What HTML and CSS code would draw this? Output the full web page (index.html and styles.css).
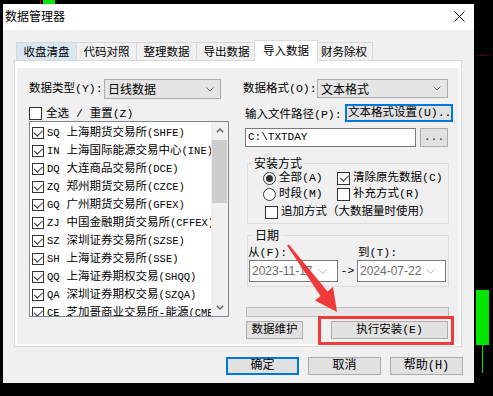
FILE: index.html
```html
<!DOCTYPE html>
<html>
<head>
<meta charset="utf-8">
<link rel="stylesheet" href="styles.css">
</head>
<body>
<div class="bg-redline"></div>
<div class="bg-greentop"></div>
<div class="bg-dots"></div>
<div class="candle"></div>
<div class="wick"></div>

<div class="win">
  <div class="titlebar">
    <span class="title">数据管理器</span>
    <svg class="close" width="11" height="11" viewBox="0 0 11 11"><path d="M0.5 0.5L10.5 10.5M10.5 0.5L0.5 10.5" stroke="#000" stroke-width="1" fill="none"/></svg>
  </div>
  <div class="client">
    <div class="tabs">
      <div class="tab hot">收盘清盘</div>
      <div class="tab">代码对照</div>
      <div class="tab">整理数据</div>
      <div class="tab">导出数据</div>
      <div class="tab sel">导入数据</div>
      <div class="tab last">财务除权</div>
    </div>
    <div class="panel">
      <div class="page">
        <div class="left">
          <div class="r1">
            <span class="lbl w75">数据类型(Y):</span>
            <div class="combo c117"><span>日线数据</span><svg class="chev" width="8" height="5" viewBox="0 0 8 5"><path d="M0.5 0.5L4 4L7.5 0.5" stroke="#707070" fill="none"/></svg></div>
          </div>
          <div class="allrow"><span class="cb"></span><span>全选 / 重置(Z)</span></div>
          <div class="list">
            <div class="items">
              <div class="item"><span class="cb sm on"></span><span class="t"><span class="en">SQ</span> 上海期货交易所<span class="en">(SHFE)</span></span></div>
              <div class="item"><span class="cb sm on"></span><span class="t"><span class="en">IN</span> 上海国际能源交易中心<span class="en">(INE)</span></span></div>
              <div class="item"><span class="cb sm on"></span><span class="t"><span class="en">DQ</span> 大连商品交易所<span class="en">(DCE)</span></span></div>
              <div class="item"><span class="cb sm on"></span><span class="t"><span class="en">ZQ</span> 郑州期货交易所<span class="en">(CZCE)</span></span></div>
              <div class="item"><span class="cb sm on"></span><span class="t"><span class="en">GQ</span> 广州期货交易所<span class="en">(GFEX)</span></span></div>
              <div class="item"><span class="cb sm on"></span><span class="t"><span class="en">ZJ</span> 中国金融期货交易所<span class="en">(CFFEX)</span></span></div>
              <div class="item"><span class="cb sm on"></span><span class="t"><span class="en">SZ</span> 深圳证券交易所<span class="en">(SZSE)</span></span></div>
              <div class="item"><span class="cb sm on"></span><span class="t"><span class="en">SH</span> 上海证券交易所<span class="en">(SSE)</span></span></div>
              <div class="item"><span class="cb sm on"></span><span class="t"><span class="en">QQ</span> 上海证券期权交易<span class="en">(SHQQ)</span></span></div>
              <div class="item"><span class="cb sm on"></span><span class="t"><span class="en">QA</span> 深圳证券期权交易<span class="en">(SZQA)</span></span></div>
              <div class="item"><span class="cb sm on"></span><span class="t"><span class="en">CE</span> 芝加哥商业交易所-能源<span class="en">(CME)</span></span></div>
            </div>
            <div class="sbar">
              <div class="sbtn"><svg width="8" height="5" viewBox="0 0 8 5"><path d="M0.8 4.2L4 1L7.2 4.2" stroke="#606060" stroke-width="1.4" fill="none"/></svg></div>
              <div class="thumb"></div>
              <div class="strack"></div>
              <div class="sbtn"><svg width="8" height="5" viewBox="0 0 8 5"><path d="M0.8 0.8L4 4L7.2 0.8" stroke="#606060" stroke-width="1.4" fill="none"/></svg></div>
            </div>
          </div>
        </div>

        <div class="right">
          <div class="rr1">
            <span class="lbl w74">数据格式(O):</span>
            <div class="combo c131"><span>文本格式</span><svg class="chev" width="8" height="5" viewBox="0 0 8 5"><path d="M0.5 0.5L4 4L7.5 0.5" stroke="#707070" fill="none"/></svg></div>
          </div>
          <div class="rr2">
            <span class="lbl w100">输入文件路径(P):</span>
            <div class="tbtn">文本格式设置(U)..</div>
          </div>
          <div class="rr3">
            <div class="inp">C:\TXTDAY</div>
            <div class="more">...</div>
          </div>
          <fieldset class="grp g1">
            <legend>安装方式</legend>
            <div class="gbody">
              <div class="opt">
                <div class="o1"><span class="rb on"></span><span>全部(A)</span></div>
                <div class="o2"><span class="cb on"></span><span>清除原先数据(C)</span></div>
              </div>
              <div class="opt">
                <div class="o1"><span class="rb"></span><span>时段(M)</span></div>
                <div class="o2"><span class="cb"></span><span>补充方式(R)</span></div>
              </div>
              <div class="opt o3">
                <div class="o2"><span class="cb"></span><span>追加方式（大数据量时使用）</span></div>
              </div>
            </div>
          </fieldset>
          <fieldset class="grp g2">
            <legend>日期</legend>
            <div class="dbody">
              <span class="dlbl l1">从(F):</span>
              <span></span>
              <span class="dlbl l2">到(T):</span>
              <div class="dcombo"><span>2023-11-17</span><svg width="9" height="5" viewBox="0 0 9 5"><path d="M0.5 0.5L4.5 4.5L8.5 0.5" stroke="#b8b8b8" fill="none"/></svg></div>
              <span class="darrow">-&gt;</span>
              <div class="dcombo"><span>2024-07-22</span><svg width="9" height="5" viewBox="0 0 9 5"><path d="M0.5 0.5L4.5 4.5L8.5 0.5" stroke="#b8b8b8" fill="none"/></svg></div>
            </div>
          </fieldset>
          <div class="prog"></div>
          <div class="brow">
            <div class="btn b1">数据维护</div>
            <div class="btn b2">执行安装(E)</div>
          </div>
        </div>
      </div>
    </div>
    <div class="footer">
      <div class="btn fbtn def">确定</div>
      <div class="btn fbtn">取消</div>
      <div class="btn fbtn">帮助(H)</div>
    </div>
  </div>
</div>

<svg class="annot" width="493" height="396" viewBox="0 0 493 396">
  <polygon points="287,245.5 289,244.5 327.5,291.5 333,287 337,312 315,300.5 320.5,296" fill="#f03a3a"/>
  <rect x="319.5" y="317.5" width="133" height="26" fill="none" stroke="#f33b3b" stroke-width="3"/>
</svg>
</body>
</html>
```
FILE: styles.css
```css
* { box-sizing: border-box; }
html, body { margin: 0; padding: 0; }
body {
  background: #000;
  width: 493px;
  height: 396px;
  overflow: hidden;
  position: relative;
  font-family: "Liberation Mono", "Noto Sans CJK SC", sans-serif;
  font-size: 11.5px;
  line-height: 14px;
  color: #000;
}

/* background chart fragments */
.bg-redline { position: absolute; left: 40px; top: 0; width: 1px; height: 4px; background: #c00000; }
.bg-greentop { position: absolute; left: 43px; top: 0; width: 12px; height: 4px; background: #00e600; }
.bg-dots { position: absolute; left: 477px; top: 55px; width: 13px; height: 1px;
  background: repeating-linear-gradient(90deg, #b00000 0 1px, transparent 1px 3px); }
.candle { position: absolute; left: 476px; top: 290px; width: 13px; height: 55px; background: #00e600; }
.wick { position: absolute; left: 482px; top: 345px; width: 1px; height: 28px; background: #00e600; }

.win {
  margin: 4px 0 0 3px;
  width: 471px;
  height: 379px;
  background: #f0f0f0;
  display: flex;
  flex-direction: column;
}
.titlebar {
  height: 26px;
  background: #fff;
  display: flex;
  align-items: center;
  justify-content: space-between;
  padding: 0 9px 2px 2px;
}
.title { font-family: "Noto Sans CJK SC", sans-serif; font-size: 12px; line-height: 14px; }

.client {
  flex: 1;
  padding: 10px 12px 0 11px;
  display: flex;
  flex-direction: column;
}
.tabs {
  display: flex;
  align-items: flex-end;
  height: 20px;
  padding-left: 2px;
  position: relative;
  z-index: 1;
}
.tab {
  width: 61px;
  height: 18px;
  margin-left: -1px;
  border: 1px solid #d9d9d9;
  border-bottom: none;
  background: #f0f0f0;
  text-align: center;
  line-height: 17px;
  font-family: "Noto Sans CJK SC", sans-serif;
  font-size: 11.5px;
}
.tab:first-child { margin-left: 0; }
.tab.hot { background: #d8e6f2; }
.tab.sel {
  background: #fff;
  width: 64px;
  height: 21px;
  margin: 0 -2px -1px -3px;
  position: relative;
  z-index: 2;
  line-height: 19px;
}
.tab.last { width: 58px; }

.panel {
  height: 287px;
  border: 1px solid #d9d9d9;
  background: #fff;
  padding: 7px 2px 2px 2px;
}
.page {
  height: 100%;
  background: #f0f0f0;
  display: flex;
  padding: 11px 0 0 12px;
}

.lbl { white-space: nowrap; }
.w75 { width: 75px; }
.w74 { width: 74px; }
.w100 { width: 100px; margin-left: 2px; padding-top: 3px; }

.combo {
  display: flex;
  align-items: center;
  justify-content: space-between;
  height: 100%;
  border: 1px solid #adadad;
  background: #e5e5e5;
  padding: 0 6px 0 3px;
  font-family: "Noto Sans CJK SC", sans-serif;
  font-size: 12px;
}
.c117 { width: 117px; }
.c131 { width: 131px; }

/* left column */
.left { width: 200px; display: flex; flex-direction: column; }
.r1 { display: flex; align-items: center; height: 20px; }
.allrow { display: flex; align-items: center; gap: 4px; height: 13px; margin-top: 8px; white-space: nowrap; }
.list {
  margin-top: 1px;
  height: 196px;
  border: 1px solid #828790;
  background: #fff;
  display: flex;
}
.items { flex: 1; overflow: hidden; padding-top: 2px; }
.item { height: 18px; display: flex; align-items: center; padding-left: 2px; white-space: nowrap; }
.item .cb { margin-right: 3px; flex: none; }
.en { font-size: 10.5px; }
.sbar { width: 17px; flex: none; background: #f0f0f0; display: flex; flex-direction: column; }
.sbtn { height: 17px; display: flex; align-items: center; justify-content: center; }
.thumb { height: 63px; margin: 1px 1px 0 1px; background: #cdcdcd; }
.strack { flex: 1; }

/* checkbox / radio */
.cb {
  display: inline-block;
  position: relative;
  width: 13px;
  height: 13px;
  border: 1px solid #333;
  background: #fff;
  flex: none;
}
.cb.sm { width: 12px; height: 12px; }
.cb.on::after {
  content: "";
  position: absolute;
  left: 3.5px;
  top: 0.5px;
  width: 3.5px;
  height: 7px;
  border: solid #333;
  border-width: 0 1.4px 1.4px 0;
  transform: rotate(45deg);
}
.cb.sm.on::after { left: 3px; top: 0; }
.rb {
  display: inline-block;
  position: relative;
  width: 13px;
  height: 13px;
  border: 1px solid #333;
  border-radius: 50%;
  background: #fff;
  flex: none;
}
.rb.on::after {
  content: "";
  position: absolute;
  left: 2px;
  top: 2px;
  width: 7px;
  height: 7px;
  border-radius: 50%;
  background: #333;
}

/* right column */
.right { width: 210px; margin-left: 14px; display: flex; flex-direction: column; }
.rr1 { display: flex; align-items: center; height: 19px; }
.rr2 { display: flex; align-items: center; height: 18px; margin-top: 6px; }
.tbtn {
  width: 108px;
  height: 18px;
  border: 2px solid #0078d7;
  background: #e1e1e1;
  padding-left: 1px;
  line-height: 14px;
  white-space: nowrap;
  overflow: hidden;
}
.rr3 { display: flex; height: 19px; margin-top: 6px; margin-left: 2px; }
.inp {
  width: 171px;
  border: 1px solid #7a7a7a;
  background: #fff;
  font-size: 11px;
  line-height: 17px;
  padding-left: 2px;
}
.more {
  width: 28px;
  margin-left: 4px;
  border: 1px solid #adadad;
  background: #e1e1e1;
  text-align: center;
  line-height: 15px;
  color: #333;
}

.grp {
  margin: 9px 0 0 4px;
  padding: 0;
  width: 202px;
  min-width: 0;
  border: 1px solid #dcdcdc;
}
.grp legend {
  margin-left: 4px;
  padding: 0 2px;
  font-family: "Noto Sans CJK SC", sans-serif;
  font-size: 12px;
  line-height: 14px;
}
.gbody { padding: 0 0 3px 15px; }
.opt { display: flex; align-items: center; height: 16px; white-space: nowrap; }
.o1 { width: 74px; display: flex; align-items: center; gap: 3px; }
.o2 { display: flex; align-items: center; gap: 3px; }
.o3 { margin-top: 2px; margin-left: 2px; }

.g2 { margin-top: 4px; }
.g2 legend { margin-left: 5px; }
.dbody {
  display: grid;
  grid-template-columns: 89px 19px 89px;
  grid-template-rows: 18px 22px;
  padding: 0 0 4px 1px;
}
.dlbl { align-self: end; white-space: nowrap; }
.l1 { margin-left: -1px; }
.l2 { margin-left: 1px; }
.dcombo {
  border: 1px solid #7a7a7a;
  background: #fff;
  display: flex;
  align-items: center;
  justify-content: space-between;
  padding: 0 10px 0 2px;
  font-family: "Liberation Sans", sans-serif;
  font-size: 12px;
  color: #6d6d6d;
}
.darrow { align-self: center; text-align: center; }

.prog {
  margin: 20px 0 0 3px;
  width: 203px;
  height: 10px;
  border: 1px solid #bcbcbc;
  background: #e6e6e6;
}
.brow { display: flex; margin-top: 4px; height: 18px; margin-left: 3px; }
.btn {
  height: 18px;
  border: 1px solid #adadad;
  background: #e1e1e1;
  text-align: center;
  line-height: 16px;
  white-space: nowrap;
}
.b1 { width: 57px; }
.b2 { width: 117px; margin-left: 28px; }

.footer {
  display: flex;
  justify-content: flex-end;
  gap: 9px;
  margin-top: 10px;
  margin-right: -1px;
}
.fbtn { width: 73px; font-size: 12px; }
.def { border: 2px solid #0078d7; line-height: 14px; }

.annot { position: absolute; left: 0; top: 0; pointer-events: none; }
```
